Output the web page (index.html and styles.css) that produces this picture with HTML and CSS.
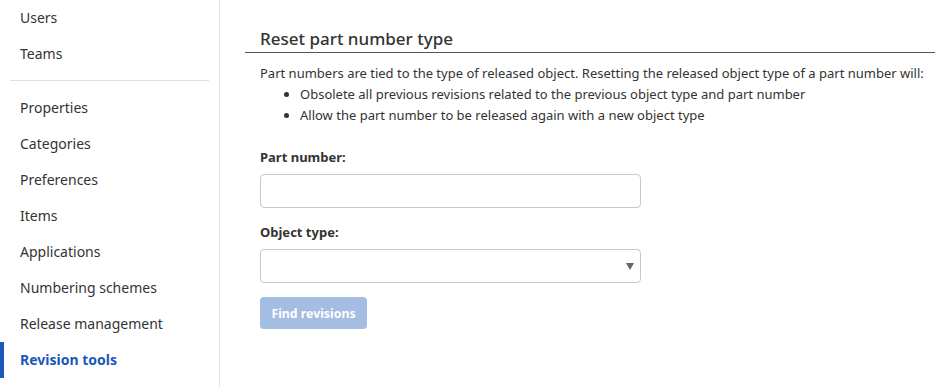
FILE: index.html
```html
<!DOCTYPE html>
<html>
<head>
<meta charset="utf-8">
<link rel="stylesheet" href="styles.css">
</head>
<body>
<div class="app">
  <nav class="sidebar">
    <div class="nav-item">Users</div>
    <div class="nav-item">Teams</div>
    <div class="divider"></div>
    <div class="nav-item">Properties</div>
    <div class="nav-item">Categories</div>
    <div class="nav-item">Preferences</div>
    <div class="nav-item">Items</div>
    <div class="nav-item">Applications</div>
    <div class="nav-item">Numbering schemes</div>
    <div class="nav-item">Release management</div>
    <div class="nav-item active">Revision tools</div>
  </nav>
  <main class="main">
    <h2 class="title">Reset part number type</h2>
    <div class="content">
      <p class="intro">Part numbers are tied to the type of released object. Resetting the released object type of a part number will:</p>
      <ul class="bullets">
        <li>Obsolete all previous revisions related to the previous object type and part number</li>
        <li>Allow the part number to be released again with a new object type</li>
      </ul>
      <label class="label">Part number:</label>
      <div class="field"></div>
      <label class="label label-2">Object type:</label>
      <div class="field select"><span class="caret"></span></div>
      <button class="btn">Find revisions</button>
    </div>
  </main>
</div>
</body>
</html>
```
FILE: styles.css
```css
* { box-sizing: border-box; }
html, body { margin: 0; padding: 0; background: #fff; }
body { font-family: "Noto Sans", Roboto, sans-serif; color: #333; }
.app { display: flex; width: 935px; height: 387px; overflow: hidden; }
.sidebar {
  width: 220px;
  flex: none;
  border-right: 1px solid #dde3ea;
  display: flex;
  flex-direction: column;
}
.nav-item {
  height: 36px;
  line-height: 36px;
  padding-left: 20px;
  font-size: 14px;
  color: #333;
  position: relative;
}
.nav-item.active { color: #1a57b8; font-weight: 700; }
.nav-item.active::before {
  content: "";
  position: absolute;
  left: 0; top: 0; bottom: 0;
  width: 4px;
  background: #1a57b8;
}
.divider {
  height: 1px;
  background: #dedede;
  margin: 8px 10px 9px 10px;
}
.main { flex: 1; padding: 27px 0 0 25px; }
.title {
  margin: 0;
  padding: 0 0 1px 15px;
  font-size: 17px;
  line-height: 24px;
  font-weight: 500;
  color: #333;
  border-bottom: 1px solid #555;
}
.content { padding-left: 15px; }
.intro { margin: 10px 0 0 0; font-size: 13px; line-height: 21px; color: #333; }
.bullets { margin: 0; padding-left: 40px; font-size: 13px; line-height: 21px; }
.label {
  display: block;
  margin-top: 21px;
  font-size: 13px;
  line-height: 21px;
  font-weight: 700;
  color: #333;
}
.label-2 { margin-top: 14px; }
.field {
  margin-top: 6px;
  width: 381px;
  height: 34px;
  border: 1px solid #c8c8c8;
  border-radius: 4px;
  background: #fff;
  position: relative;
}
.caret {
  position: absolute;
  right: 6px;
  top: 13px;
  width: 0; height: 0;
  border-left: 4px solid transparent;
  border-right: 4px solid transparent;
  border-top: 7px solid #666;
}
.btn {
  display: block;
  margin-top: 14px;
  width: 107px;
  height: 32px;
  border: none;
  border-radius: 4px;
  background: #a4bde3;
  color: #fff;
  font-family: "Noto Sans", Roboto, sans-serif;
  font-size: 12.3px;
  font-weight: 700;
  padding: 0;
}
```
